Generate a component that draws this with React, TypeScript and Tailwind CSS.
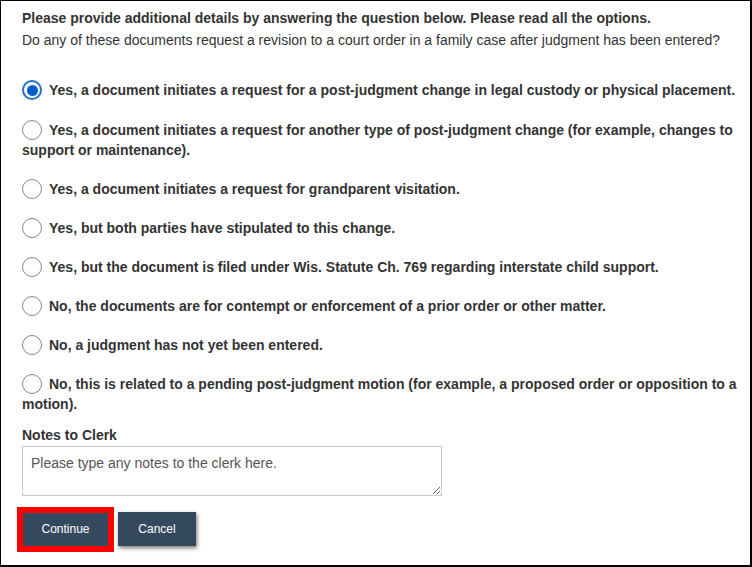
import React from "react";

const options = [
  "Yes, a document initiates a request for a post-judgment change in legal custody or physical placement.",
  "Yes, a document initiates a request for another type of post-judgment change (for example, changes to support or maintenance).",
  "Yes, a document initiates a request for grandparent visitation.",
  "Yes, but both parties have stipulated to this change.",
  "Yes, but the document is filed under Wis. Statute Ch. 769 regarding interstate child support.",
  "No, the documents are for contempt or enforcement of a prior order or other matter.",
  "No, a judgment has not yet been entered.",
  "No, this is related to a pending post-judgment motion (for example, a proposed order or opposition to a motion).",
];

function Radio({ checked }: { checked: boolean }) {
  return checked ? (
    <span className="inline-flex align-top items-center justify-center w-[20px] h-[20px] rounded-full border-[2px] border-[#1f6fd6] bg-white mr-[7px] box-border">
      <span className="block w-[11px] h-[11px] rounded-full bg-[#0a5ccd]" />
    </span>
  ) : (
    <span className="inline-block align-top w-[20px] h-[20px] rounded-full border border-[#858585] bg-white mr-[7px] box-border" />
  );
}

export default function App() {
  return (
    <div
      className="w-[752px] h-[567px] bg-white border-t border-l border-r-2 border-b-2 border-black box-border pl-[21px] pr-[6px] text-[#333] overflow-hidden"
      style={{ fontFamily: '"Liberation Sans", Arial, sans-serif' }}
    >
      <p className="mt-[7px] text-[14px] font-bold leading-[20px]">
        Please provide additional details by answering the question below. Please read all the options.
      </p>
      <p className="mt-[2px] text-[14px] leading-[20px]">
        Do any of these documents request a revision to a court order in a family case after judgment has been entered?
      </p>
      <div className="mt-[30px] flex flex-col gap-[19px]">
        {options.map((o, i) => (
          <label
            key={i}
            className={`block text-[14px] font-bold leading-[20px] ${i === 1 ? "mt-[1px]" : ""}`}
          >
            <Radio checked={i === 0} />
            {o}
          </label>
        ))}
      </div>
      <div className="mt-[11px] text-[14px] font-bold leading-[20px]">Notes to Clerk</div>
      <textarea
        className="mt-[1px] block w-[420px] h-[50px] border border-[#c8c8c8] pl-[8px] pt-[6px] text-[14px] leading-[20px] text-[#333] placeholder:text-[#555] outline-none"
        style={{ fontFamily: '"Liberation Sans", Arial, sans-serif' }}
        placeholder="Please type any notes to the clerk here."
      />
      <div className="mt-[16px] flex items-center">
        <button className="ml-[1px] w-[85px] h-[33px] bg-[#34495e] text-white text-[12px] outline-[6px] outline-solid outline-[#ff0000]">
          Continue
        </button>
        <button className="ml-[10px] w-[78px] h-[34px] bg-[#34495e] text-white text-[12px] shadow-[1px_2px_4px_rgba(0,0,0,0.55)]">
          Cancel
        </button>
      </div>
    </div>
  );
}
